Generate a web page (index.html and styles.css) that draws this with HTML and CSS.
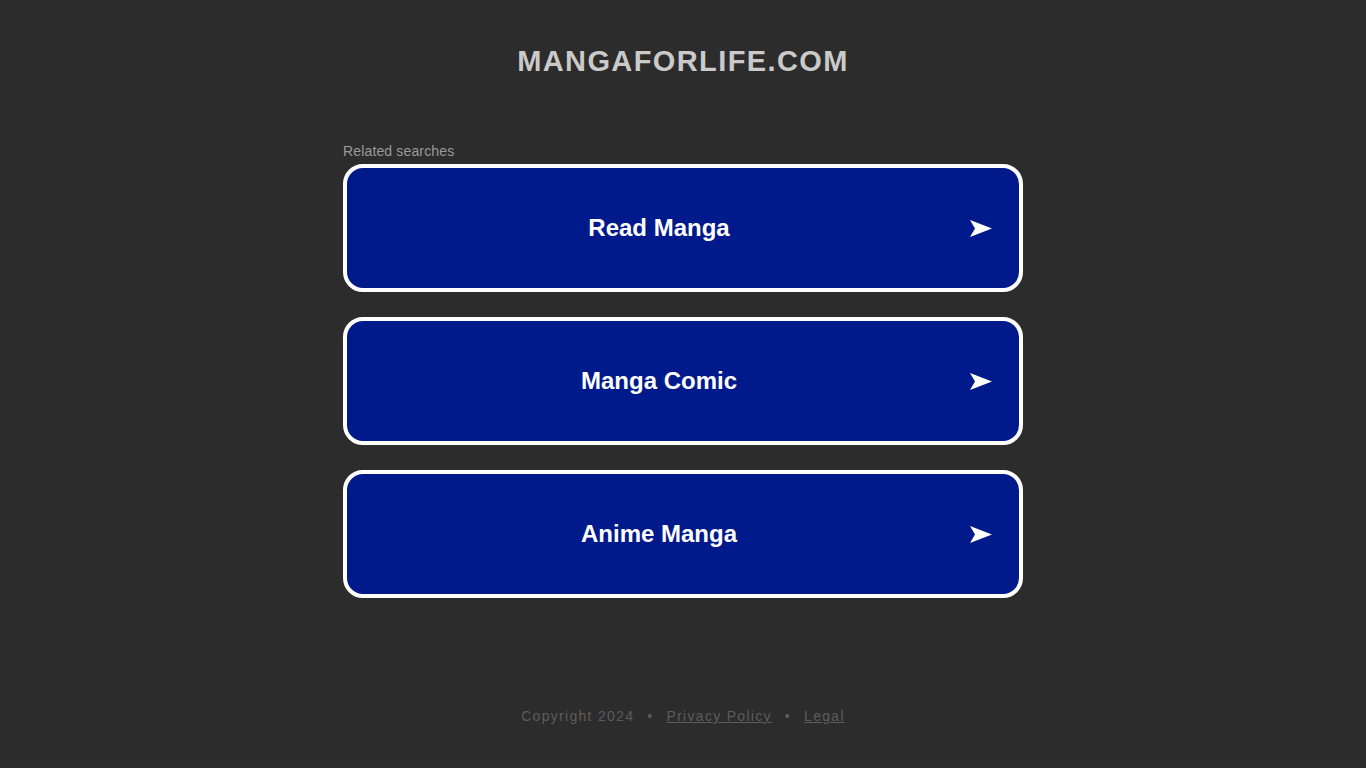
FILE: index.html
```html
<!DOCTYPE html>
<html>
<head>
<meta charset="utf-8">
<link rel="stylesheet" href="styles.css">
</head>
<body>
<div class="page">
  <h1 class="title">MANGAFORLIFE.COM</h1>
  <div class="searches">
    <div class="label">Related searches</div>
    <a class="box" href="#"><span class="box-text">Read Manga</span><svg class="arrow" viewBox="0 0 22 17" width="22" height="17"><polygon points="0,0 22,8.5 0,17 5,8.5" fill="#ffffff"/></svg></a>
    <a class="box" href="#"><span class="box-text">Manga Comic</span><svg class="arrow" viewBox="0 0 22 17" width="22" height="17"><polygon points="0,0 22,8.5 0,17 5,8.5" fill="#ffffff"/></svg></a>
    <a class="box" href="#"><span class="box-text">Anime Manga</span><svg class="arrow" viewBox="0 0 22 17" width="22" height="17"><polygon points="0,0 22,8.5 0,17 5,8.5" fill="#ffffff"/></svg></a>
  </div>
  <div class="footer">
    <span>Copyright 2024</span><span class="dot">•</span><a href="#">Privacy Policy</a><span class="dot">•</span><a href="#">Legal</a>
  </div>
</div>
</body>
</html>
```
FILE: styles.css
```css
html, body {
  margin: 0;
  padding: 0;
  background: #2c2c2c;
  font-family: "Liberation Sans", Arial, sans-serif;
}
.page {
  display: flex;
  flex-direction: column;
  align-items: center;
  min-height: 768px;
}
.title {
  margin: 43px 0 0 0;
  font-size: 29px;
  line-height: 36px;
  font-weight: bold;
  color: #cacaca;
  letter-spacing: 1.4px;
}
.searches {
  width: 680px;
  margin-top: 64px;
  display: flex;
  flex-direction: column;
}
.label {
  font-size: 14px;
  line-height: 16px;
  color: #9a9a9a;
  letter-spacing: 0.15px;
  margin-bottom: 5px;
}
.box {
  box-sizing: border-box;
  height: 128px;
  border: 4px solid #ffffff;
  border-radius: 20px;
  background: #011a8b;
  display: flex;
  align-items: center;
  text-decoration: none;
  margin-bottom: 25px;
  padding-right: 27px;
}
.box-text {
  flex: 1;
  text-align: center;
  color: #ffffff;
  font-size: 24px;
  font-weight: bold;
  padding-left: 1px;
}
.arrow {
  display: block;
  flex: none;
}
.footer {
  margin-top: 85px;
  font-size: 14px;
  color: #5c5c5c;
  letter-spacing: 1.3px;
}
.footer a {
  color: #5c5c5c;
  text-decoration: underline;
}
.dot {
  margin: 0 13px;
}
```
